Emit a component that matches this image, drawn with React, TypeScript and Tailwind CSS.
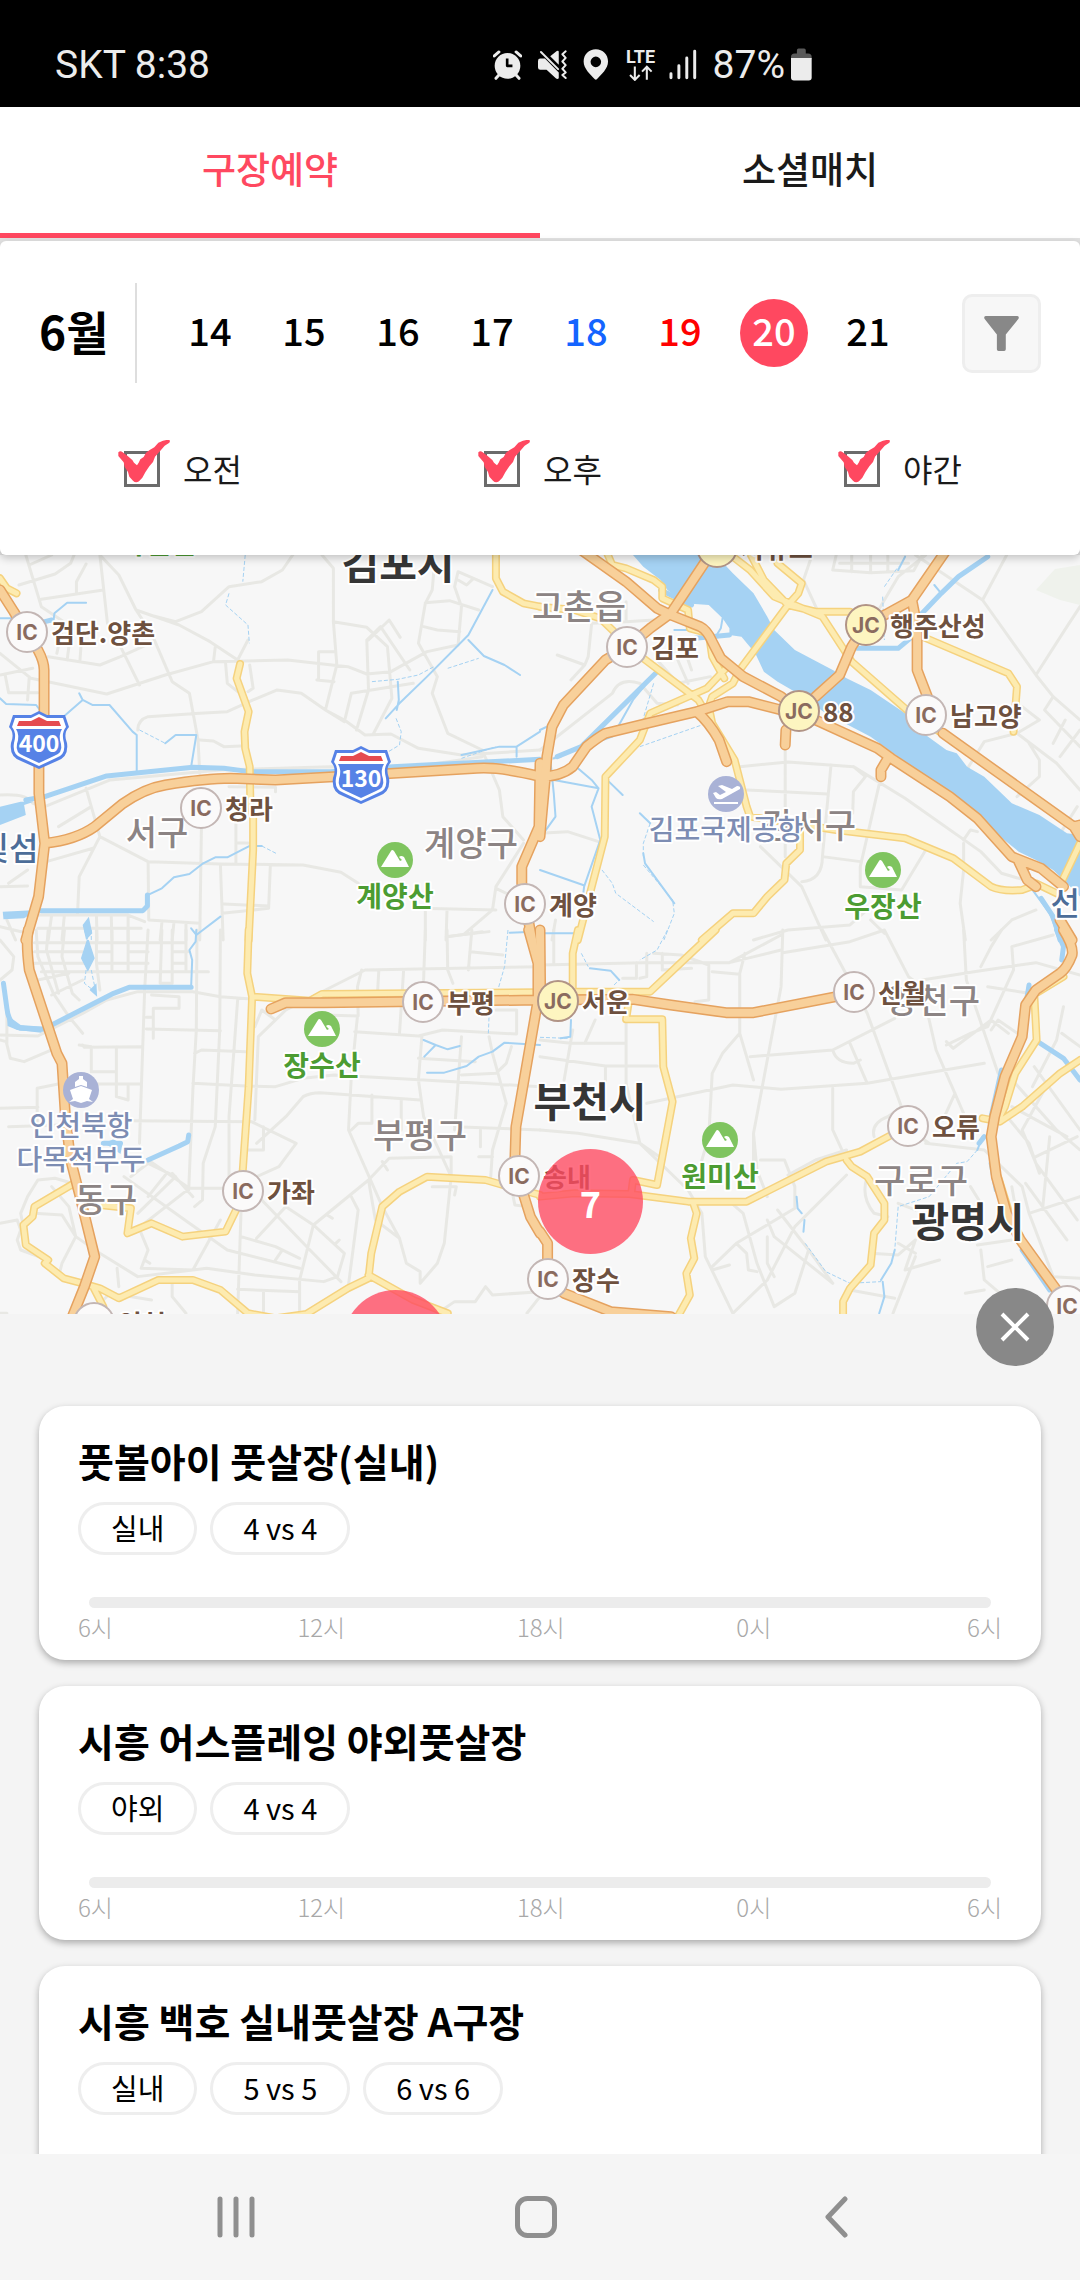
import React, { useState } from "react";

type Tile = {
  x: number;
  y: number;
  minor: string;
  stream: string;
  dotted: string;
  canal: string;
  water: string;
  yellow: string;
  orange: string;
};

// Each tile is drawn on a 1568 x 1170 grid and covers 540 x 390 of the map.
const TILES: Tile[] = [
  {
    x: 0,
    y: -5,
    minor:
      "M75 15L120 170L185 215L165 310M85 45L150 15M55 105L160 72L205 40L215 15M120 148L300 120M250 42L222 95L222 130M290 15L312 220L350 290L405 405M290 15L345 75L395 180L520 225L610 275L690 330L720 270M435 195L510 215L585 185L665 110L760 95L820 60L850 15M935 15L968 55L968 215L978 345L945 480L1000 510L1060 555L1135 552L1215 595L1340 615L1568 600M968 215L1065 232L1125 290L1138 445L1085 550M1190 360L1105 230L1065 270L1070 420L1035 540M1130 210L1070 270M1130 210L1162 262M0 310L90 385L310 432L480 375L620 335L835 330L1010 350L1065 372L1135 365L1240 305L1330 285L1340 170L1320 110L1330 65L1430 110M1260 60L1255 120L1235 160L1215 280L1270 380L1255 430L1300 550L1400 600L1450 720L1460 800L1520 870M1235 158L1305 152L1390 180M1230 230L1270 240L1335 245M395 180L440 250L500 395L550 430L575 570L580 670M400 540Q400 510 430 500L580 490L660 485L735 450L805 420L875 430L945 480L1000 515L1020 430L1200 400M620 335L625 290M655 340L660 400L715 445M725 345L735 415L720 425M925 390L925 305L970 305M920 390L970 395M85 380L80 450M15 375L25 428L110 428M0 375L95 355M140 320L290 345L350 320L435 280M200 290L195 330M235 290L232 335M580 570L620 573L650 590L700 588M250 715L290 860L230 980L225 1095M290 860L430 935L640 942L880 945L990 967L1040 1000M430 935L432 1110L580 1120M585 820L580 1170M640 945L648 1170M685 820L685 942M685 878L735 880M785 945L780 1075L645 1090M650 1062L780 1068M0 1010L80 1008M25 1000L80 960M0 735Q80 730 95 760L130 770L320 690L640 660L960 650L1140 660L1400 620M665 710L800 712L800 725M20 1110L45 1170M0 1130L80 1150M110 1095L370 1095L420 1115M110 1135L410 1135M150 1095L140 1170M187 1095L180 1170M280 1095L282 1170M323 1095L325 1170M372 1095L372 1170M470 1118L465 1170M505 1118L500 1170M540 1118L540 1170M140 890L250 855M135 935L270 895M170 830L265 770M1520 880L1440 1010L1430 1080L1350 1150M1220 1075L1440 1080M1235 1080L1235 1170M1298 1080L1295 1170M1295 1160L1420 1145M1440 1015L1490 1040M1330 90L1355 105L1375 85",
    stream:
      "M190 495L240 450L230 430M240 450L268 465L318 465L385 545L397 555L397 665M480 580L510 555L570 555L555 650M430 1035L470 1015L505 982L550 972L590 940L625 922L660 922L725 888L760 888M1120 505L1160 460L1240 380L1360 255L1430 120M1360 270L1405 318L1465 345L1510 375M1155 395L1158 450L1152 480M0 445L18 462L105 465L130 500M250 158L195 158L158 190L155 215M555 1135L570 1155L640 1100M1500 620L1500 590L1568 545M0 205L40 205M1340 615L1450 590L1500 590",
    dotted:
      "M712 15L705 95M665 130L655 165L720 225L724 280M1080 395L1155 388L1215 375L1260 350M1300 355L1390 325M1150 505L1165 545L1160 585L1120 610M405 540L480 580M760 888L805 912M1340 625L1440 590",
    canal:
      "M75 750L130 740L310 678L560 652L650 655L725 665L960 665L1140 650L1568 628M120 1082L415 1082L428 1068L428 1035M130 215L150 210",
    water: "M0 770L60 755L98 755L70 765L75 795L0 825ZM8 1085L110 1080L70 1105L10 1108ZM240 1125L258 1100L268 1150L250 1170Z",
    yellow:
      "M0 85L20 115L48 130M1440 10L1440 85L1460 125L1520 160L1568 170M697 342L687 385L722 485L710 545L712 595L725 650L727 760L735 800L735 900L722 1170",
    orange:
      "M0 120L40 185L75 245L110 300Q128 335 128 360L128 495L113 640L113 730L130 880L112 1040L75 1170M130 880Q220 870 275 830L355 762Q420 715 480 705Q600 685 670 685L800 690L1060 675L1385 655Q1450 650 1568 680M1568 640L1565 830L1515 950L1515 1000L1525 1060L1545 1170",
  },
  {
    x: 540,
    y: -5,
    minor:
      "M50 315L130 345L90 390M150 220L140 320L130 345M150 220L250 215M250 155L250 215L330 210M0 600L210 430Q230 380 290 400L340 460L400 465M340 330L400 400L495 380M400 330L430 400M430 330L440 360M860 15L850 60L960 68L1085 62L1110 15M905 15L905 65M960 15L960 65M1010 15L1010 65M870 40L1070 40M790 15L765 90L805 180M1090 15L1285 150L1440 375L1490 440L1568 510M1355 15L1285 150M1440 375L1530 230L1568 170M1120 15L1040 80L960 220M1385 550L1290 575L1190 740M1400 470L1450 510L1385 550L1500 640L1568 720M1490 440L1465 480L1568 590M1525 510L1490 580M1568 540L1510 620M1420 580L1450 630L1450 680L1385 740M1560 770L1455 940M580 650L720 636L910 650L1060 745L1280 905L1340 970L1440 1000M712 590L712 920M600 720L835 732M845 645L820 920L930 935M990 680L930 950L930 1010M910 650L945 680L910 725L908 790M640 890L760 1010L830 1170M820 920Q820 990 760 995M1120 900L1050 1020L930 1010M1230 880L1230 960L1220 1060L1235 1170M1230 870L1250 840L1270 845M950 1080L900 1125L720 1140L620 1170M960 1110L1000 1150M1370 1110L1310 1170M1440 1080L1370 1110M0 850L80 845L170 875M45 1110L35 1170M0 635L60 620",
    stream:
      "M30 630L40 730L45 800L10 850M110 655L150 690L170 715L150 770L175 870L128 1010L110 1170M40 690L170 715M330 375L270 450L210 560L100 600L40 625M0 540L40 520M0 960L125 1005M200 695L240 735M290 790L320 820M300 910L305 940L390 1060M530 205L525 235L510 260M390 240L460 240L490 250M1430 1020L1480 1090L1510 1170M1060 20L1040 60M0 1150L120 1150M1145 105L1165 130",
    dotted:
      "M290 590L470 525M320 820L300 880L300 920M300 945L385 1050L390 1090L360 1170M180 960L210 1000L220 1030L330 1115M995 140L1000 270M1000 110L1040 50M330 400L290 540M540 380L545 400",
    canal:
      "M920 295L1040 295L1075 265M1080 230L1100 200L1165 130L1215 80L1300 20M450 265L550 255M50 620L120 590L340 365M350 120L440 165M1455 1045L1490 1100L1510 1170",
    water:
      "M270 15L300 50L350 90L370 120L420 160L490 165L530 205L550 235L550 255L585 260L625 310L650 365L690 395L740 425L830 490L960 560L1040 620L1180 730L1260 790L1300 830L1390 905L1440 930L1490 960L1530 1000L1568 1040L1568 855L1530 850L1450 795L1370 760L1290 680L1240 650L1210 610L1180 600L1120 555L1060 490L960 420L890 385L850 360L740 300L680 240L660 200L620 130L560 70L510 15Z",
    yellow:
      "M195 10L210 45L250 55L330 90L355 110L355 145L430 180L435 235L490 250L500 320L535 385M0 170L100 180L175 205L215 245L255 290L460 450L500 520L565 630L600 770L610 800L860 840L1060 865L1200 925L1310 1010Q1340 1025 1400 1020L1440 1005M560 20L610 60L680 140L820 200L905 335L1065 480L1160 545M610 10L650 90L720 165M690 40L760 100L750 130L720 165L580 360L560 400L500 440L490 470L500 520M720 165L800 185L900 185M540 355L485 415L430 440L320 490L290 570L190 680L188 860L110 1170M1110 260L1360 370L1385 410L1375 545M755 850L755 900L715 940L710 990L660 1040L620 1090L560 1090L470 1170M1568 880L1515 995M1440 1000L1500 1030",
    orange:
      "M0 860L15 690L20 620L35 530L68 465L190 330L255 290L320 235L380 190L480 35M120 0L250 95L340 175L380 195L465 230Q485 240 500 275L525 325L590 380L700 440L750 480L800 510L980 595L1020 625L1190 740L1270 805L1370 920L1455 955L1520 1010M0 680Q60 680 95 650L135 590Q165 565 190 550L310 520L455 485L545 455L605 455L700 480M455 485Q490 515 520 570L542 635M712 585L714 540M1010 625L990 660L990 680M800 440L870 375L905 290L945 225L1010 190L1080 150L1180 0M1080 150L1095 230L1095 360L1125 440M1170 550L1550 830L1568 860M1550 830L1568 825M1390 935L1415 990L1440 1010M1510 1110L1545 1170",
  },
  {
    x: 0,
    y: 375,
    minor:
      "M105 0L110 80L155 190L200 260L240 310M140 0L135 60L170 190M187 0L180 80L210 190L230 210M280 0L280 100L290 180M325 0L325 125M372 0L372 125M430 0L420 180L405 640M470 0L465 160L500 160L500 0M540 0L540 120M100 38L540 38M100 65L240 65M280 65L325 65M372 65L430 65M100 100L250 100M280 100L430 100M500 65L545 65M500 100L540 100M120 125L605 125M110 150L200 130M150 195L240 150M0 30L40 80L35 120L0 150M0 315L110 318L240 250L310 210L400 185L560 185L640 200L740 208M0 330L18 335L30 385L70 395L150 360M20 250L20 340M240 345L245 352L410 350M230 345L265 350L265 425L335 425M338 350L338 500L372 510L372 465M240 462L410 462M108 600L108 475L180 460M0 535L110 532M25 590L180 585M440 195L520 200L520 235L445 235L445 325M440 262L425 262M425 297L640 302M572 0L570 300L560 480L548 780M640 0L638 300L625 590L590 700L588 810L565 830M690 210L665 560L665 760M565 370L585 360L715 365M560 460L715 468L800 470L880 445L970 435L1230 450L1568 470M380 572L730 575L860 640L810 710L735 745M720 660L765 660L765 590M740 570L750 320L830 240L1060 120L1568 110M740 290L760 240L800 270M940 255L1040 258L1038 170L1050 120M1100 120L1095 210M1172 120L1160 310M1235 0L1230 150M1298 0L1300 120L1315 160M1030 305L1215 318L1285 300L1500 312L1500 240L1440 240M1370 0L1360 120M1365 65L1460 75M1300 20L1400 5M1038 258L1020 440L1012 600L1110 830L1160 925L1180 1000L1220 1025L1220 1060L1270 1000L1290 940L1310 740M1225 320L1215 450L1230 560L1310 740M1340 320L1320 600M1420 320L1430 370L1470 520L1430 660L1425 740M745 640L830 560L880 500Q900 488 930 488L1220 510M1165 510L1165 600M1020 600L1040 580L1080 580L1080 495M1215 385L1380 395M1340 435L1440 430L1470 400L1485 350M1320 590L1568 600M1395 600L1395 650M1390 680L1430 680M1310 740L1310 680L1130 685L1070 750L910 885L870 1050L870 1150M1070 750L1090 870L1160 925M1110 695L1125 720M1255 770L1325 770L1320 795M745 925L830 830L910 885L1000 970L980 1040L940 1055L740 1035L600 1015L560 1020L410 1015M430 690L550 775L645 775M360 740L550 880L660 960L870 1015M380 740L430 700L510 740L400 850M480 735L430 800M550 775L420 880M500 730L560 800M700 840L690 1152M760 810L900 960L990 1055M700 920L800 950L870 985M800 990L820 960M1020 800L1040 840L1020 1000L1010 1080M950 855L965 865M975 940L985 930M0 880L50 870L60 900L50 930L60 960L140 990M80 800L110 750L160 745L210 760M80 800L60 850L70 900M100 850L180 855L220 920L180 1000L170 1040M150 770L200 830L220 920L290 970L400 1040L560 1020L640 870M410 910L430 960L410 1015M340 1015L345 1070M500 1060L500 1100L540 1150M280 1130L320 1090L440 1110M690 1078L870 1085M765 1085L765 1150M0 1150L20 1150M420 990L435 1000M1270 1150L1320 1115L1380 1115L1410 1070L1430 1095L1568 1085M1530 1150L1568 1100M1490 800L1495 825L1530 830",
    stream:
      "M570 0L568 35L550 60L558 90L555 170M1232 380L1265 345L1230 330M1265 345L1300 358L1335 348M1240 428L1290 428L1355 408L1390 380L1430 365L1465 338L1568 345M1480 8L1550 5",
    dotted:
      "M1475 0L1465 110L1440 200L1420 260L1418 310M245 0L255 30M250 120L245 160L270 180M265 120L275 170M265 0L265 30",
    canal: "M10 160L20 235Q25 285 60 295L125 298M150 285L330 190L375 172L555 172M430 690L520 648L545 635L548 615M300 640L350 640",
    water: "M252 30L258 30L275 85L255 125L235 85ZM260 180L280 160L282 200ZM300 640L330 628L355 645L350 672L320 650ZM20 255L60 285L125 290L120 308L50 300L22 288Z",
    yellow:
      "M722 0L718 130L732 200L722 470L705 720L690 830L655 905L530 920L440 880L370 910L380 835L290 825M230 790L215 760L100 830L95 860L68 885L75 945L140 990L130 1000L185 1045L240 1060L290 1075L345 1105L460 1050L560 1050L640 1080L720 1150L800 1165L890 1152L1010 1075L1070 1045L1078 970L1110 830L1160 785L1240 740L1410 750L1460 765L1568 795M732 200L900 212L935 192L1568 187M1070 1035L1200 1110L1300 1150M270 1070L300 1130",
    orange:
      "M82 0Q75 40 85 120L165 370L180 400L190 560L205 690L230 790L275 980L245 1070L210 1160M1535 0L1562 100L1562 210L1520 460L1498 590L1495 690L1510 760L1540 860L1568 910M787 237L830 218L940 218L1568 210",
  },
  {
    x: 540,
    y: 375,
    minor:
      "M40 0L40 100M0 105L300 98L550 98L700 15M280 98L280 145L240 145M310 70L310 140L290 145M355 70L355 120L440 115M330 70L410 75L490 105L490 210L450 215M595 70L580 130L580 310L620 450M500 125L580 133M705 0L700 170L620 610L630 720L660 800M705 68L900 35L1000 0L1070 140L1110 170M820 0L950 250L1060 560M550 98L700 60M1230 0L1238 150L1330 430L1370 460M1110 150L1260 125L1440 98L1568 135M1280 110L1310 50L1340 0M1490 15L1370 50L1375 120L1300 290L1250 310L1180 345M1180 335L1200 355L1310 270L1360 310M1300 170L1420 190M1310 300L1330 270L1400 320M0 330L90 340L250 340M95 300L70 450M130 340L160 270M190 410L190 460M0 380L190 408L340 408M250 280L250 460L290 640L430 780L470 850M310 520L560 465L700 478L950 460L1290 400M580 310L530 370L500 430L490 620L450 760M610 380L850 360L1030 265M850 360Q860 400 910 400L930 390M900 340L950 460M1110 180L1150 360L1230 550M850 475L850 600L890 690M0 600L110 610L290 640L360 690M620 610L620 700M640 690L710 690L740 770L740 830M720 735L800 690L890 660M740 835L570 940L500 1010M970 620Q960 580 1010 560L1050 530M1205 490L1170 570M1120 640L1290 660L1400 770L1420 850L1490 1040M890 735L740 890L660 1050L560 1150M470 850L480 980L560 1150M545 810L590 850L630 1000L680 1130M660 870L680 920L850 1060M690 840L780 960L740 1090L680 1130M570 940L600 970L605 1020L630 1025M660 920L660 1000L680 1040M500 1020L550 1005M950 740Q930 800 970 850L1010 860M960 970L1040 975L1090 930L1060 1020L1160 990M1040 820L1090 840M1040 940L1090 970M900 1080L1030 1105M1090 980L1025 1150M1270 945L1370 930M1280 960L1290 1050L1370 1120M1300 1010L1370 990M1235 1090L1290 1080M1370 770L1400 950L1500 1090M1250 770L1280 820L1240 850M1435 410L1568 600M1520 230L1500 330L1430 470M1515 310L1568 350M1380 460L1500 600L1568 660M1370 530L1530 620M1480 450L1400 600L1440 700L1560 870M1560 620L1440 680M1410 760L1530 930M1340 540L1420 640L1450 730M1420 850L1568 800M1490 1040L1568 1045M1480 620L1460 830M780 960L850 1060M1060 590L1130 640",
    stream:
      "M145 115L205 122L230 150M90 270L88 320L60 325M745 800L748 835L760 850M768 870L765 905M995 1055L1000 1100L985 1150M1030 960L1020 1000L990 1050M1285 620L1270 660M10 155L8 170",
    dotted:
      "M370 0L340 60L290 90M120 70L140 110M0 322L80 325M770 940L830 1025L900 1060L990 1055M1270 660L1240 695L1210 700L1130 800L1040 830L1030 960M215 165L230 150",
    canal: "M1500 0L1520 50L1515 90M1420 165L1405 260M1340 420L1310 560M1445 335L1520 385L1568 450M1290 620L1275 640M1310 700L1325 780M1400 960L1480 1080",
    water: "",
    yellow:
      "M110 0L95 70L95 180M510 0L320 185L100 185M260 200L250 268L355 268L358 410L385 515L340 765L270 750L265 790M0 800L100 790L260 792L430 815L600 815L830 695L930 665L1020 615L1070 590M1285 565L1335 575L1400 530L1510 430L1568 390M890 690L905 710L950 740L1000 820L1000 870L970 910L960 1005L900 1075L880 1115L880 1160M445 820L455 850L438 925L448 985L425 1030L435 1095L400 1160M1435 190L1442 330L1380 430L1350 530L1330 570M1520 140L1440 190M1330 740L1360 840",
    orange:
      "M0 0L2 210L270 208L380 225L540 248L620 248L860 200M0 905L22 940L22 1050L70 1090L205 1145L380 1160M1520 0Q1550 50 1545 75Q1530 115 1510 130L1440 180L1410 225L1400 320L1350 440L1320 560L1310 620L1325 740L1355 850L1395 930L1500 1080",
  },
];

type TileLayer = Exclude<keyof Tile, "x" | "y">;

type LayerProps = {
  layer: TileLayer;
  stroke?: string;
  width?: number;
  fill?: string;
  dash?: string;
};

const Layer = ({
  layer,
  stroke = "none",
  width = 0,
  fill = "none",
  dash,
}: LayerProps) => (
  <g
    fill={fill}
    stroke={stroke}
    strokeWidth={width}
    strokeLinejoin="round"
    strokeLinecap={dash ? "butt" : "round"}
    strokeDasharray={dash}
  >
    {TILES.map((tile) => (
      <path
        key={`${tile.x}-${tile.y}`}
        d={tile[layer]}
        transform={`translate(${tile.x} ${tile.y}) scale(0.3444 0.3333)`}
        vectorEffect="non-scaling-stroke"
      />
    ))}
  </g>
);

type Junction = { kind: "IC" | "JC"; name: string; x: number; y: number };

const JUNCTIONS: Junction[] = [
  { kind: "IC", name: "검단.양촌", x: 27, y: 77 },
  { kind: "IC", name: "청라", x: 201, y: 253 },
  { kind: "IC", name: "김포", x: 627, y: 92 },
  { kind: "JC", name: "자유로", x: 717, y: -8 },
  { kind: "JC", name: "행주산성", x: 866, y: 70 },
  { kind: "JC", name: "88", x: 799, y: 156 },
  { kind: "IC", name: "남고양", x: 926, y: 160 },
  { kind: "IC", name: "계양", x: 525, y: 349 },
  { kind: "IC", name: "부평", x: 423, y: 447 },
  { kind: "JC", name: "서운", x: 558, y: 446 },
  { kind: "IC", name: "신월", x: 854, y: 437 },
  { kind: "IC", name: "오류", x: 908, y: 571 },
  { kind: "IC", name: "가좌", x: 243, y: 636 },
  { kind: "IC", name: "송내", x: 519, y: 621 },
  { kind: "IC", name: "장수", x: 548, y: 724 },
  { kind: "IC", name: "", x: 1067, y: 751 },
  { kind: "IC", name: "인천", x: 94, y: 768 },
];

const DISTRICTS = [
  { name: "고촌읍", x: 579, y: 49 },
  { name: "서구", x: 157, y: 275 },
  { name: "계양구", x: 471, y: 286 },
  { name: "강서구", x: 809, y: 268 },
  { name: "양천구", x: 933, y: 443 },
  { name: "부평구", x: 420, y: 578 },
  { name: "동구", x: 106, y: 642 },
  { name: "구로구", x: 921, y: 623 },
];

const CITIES = [
  { name: "김포시", x: 398, y: 6 },
  { name: "부천시", x: 590, y: 544 },
  { name: "광명시", x: 968, y: 664 },
];

const PEAKS = [
  { name: "가현산", x: 158, y: -48 },
  { name: "계양산", x: 395, y: 305 },
  { name: "우장산", x: 883, y: 315 },
  { name: "장수산", x: 322, y: 474 },
  { name: "원미산", x: 720, y: 585 },
];

const SHIELDS = [
  { name: "400", x: 39, y: 185 },
  { name: "130", x: 361, y: 220 },
];

const VenueMap = () => (
  <div className="relative aspect-[1080/759] w-full shrink-0 overflow-hidden bg-[#f7f7f7]">
    <svg
      viewBox="0 0 1080 759"
      className="block h-full w-full"
      dominantBaseline="central"
      role="img"
      aria-label="지도"
    >
      <Layer layer="minor" stroke="#e8e8e4" width={3} />
      <path d="M1036 35L1055 14L1080 10V50L1060 45Z" fill="#eff2ec" />
      <Layer layer="water" fill="#a5d2f3" />
      <Layer layer="canal" stroke="#a5d2f3" width={5} />
      <Layer layer="stream" stroke="#a5d2f3" width={2} />
      <Layer layer="dotted" stroke="#a5d2f3" width={1} dash="4 2" />
      <Layer layer="yellow" stroke="#f5d27e" width={8} />
      <Layer layer="yellow" stroke="#fdebb0" width={5} />
      <Layer layer="orange" stroke="#e5a25f" width={11} />
      <Layer layer="orange" stroke="#f8d09a" width={8} />

      <g
        textAnchor="middle"
        stroke="#ffffff"
        strokeWidth="4"
        strokeLinejoin="round"
        paintOrder="stroke"
        fontWeight="500"
      >
        {DISTRICTS.map(({ name, x, y }) => (
          <text key={name} x={x} y={y} fontSize="34" fill="#8c8484">
            {name}
          </text>
        ))}
        <g fontSize="28" fill="#7d8db3">
          <text x="726" y="273">
            김포국제공항
          </text>
          <text x="81" y="569">
            인천북항
          </text>
          <text x="81" y="603">
            다목적부두
          </text>
        </g>
        <g fontSize="32" fill="#4c6d98">
          <text x="9" y="291">
            빛섬
          </text>
          <text x="1080" y="346">
            선유
          </text>
        </g>
        {PEAKS.map(({ name, x, y }) => (
          <text
            key={name}
            x={x}
            y={y + 35}
            fontSize="28"
            fontWeight="700"
            fill="#4c9c32"
          >
            {name}
          </text>
        ))}
        {CITIES.map(({ name, x, y }) => (
          <text
            key={name}
            x={x}
            y={y}
            fontSize="41"
            fontWeight="700"
            fill="#363636"
          >
            {name}
          </text>
        ))}
      </g>

      {PEAKS.map(({ name, x, y }) => (
        <g key={name} transform={`translate(${x} ${y})`}>
          <circle r="18" fill="#7fc45f" />
          <path
            d="M-14 7L-4 -9Q-3 -11 -1 -9L5 1L7 0L4 -3Q6 -5 9 -3L14 7Z"
            fill="#ffffff"
          />
        </g>
      ))}

      <g transform="translate(726 239)">
        <circle r="18" fill="#a9b2d6" />
        <path
          d="M-13 -1L-10 -2L-6 1L0 -2L-8 -8L-4 -9L6 -5L11 -8Q15 -8 14 -5L-4 5Q-8 6 -10 4Z"
          fill="#ffffff"
        />
        <path d="M-12 9H12" stroke="#ffffff" strokeWidth="2" />
      </g>
      <g transform="translate(81 535)">
        <circle r="18" fill="#a9b2d6" />
        <path
          d="M-2 -14H2V-11L6 -8V-3L0 -5L-6 -3V-8L-2 -11ZM-11 0L0 -4L11 0L8 9L12 12L6 11L0 13L-6 11L-12 12L-8 9Z"
          fill="#ffffff"
        />
      </g>

      {SHIELDS.map(({ name, x, y }) => (
        <g key={name} transform={`translate(${x} ${y})`}>
          <path
            d="M0 -29L8 -25H26L30 -13Q24 -7 28 3Q30 17 18 21L0 29L-18 21Q-30 17 -28 3Q-24 -7 -30 -13L-26 -25H-8Z"
            fill="#5682e6"
          />
          <path
            d="M0 -26L8 -22H24L27 -13Q22 -7 25 3Q27 15 17 18L0 26L-17 18Q-27 15 -25 3Q-22 -7 -27 -13L-24 -22H-8Z"
            fill="#ffffff"
          />
          <path
            d="M-23 -11H23Q19 -5 22 4Q24 13 15 16L0 23L-15 16Q-24 13 -22 4Q-19 -5 -23 -11Z"
            fill="#5682e6"
          />
          <path d="M-22 -14L-20 -19H-8L0 -23L8 -19H20L22 -14Z" fill="#e54b4f" />
          <text
            y="2"
            fontSize="23"
            fontWeight="700"
            fill="#ffffff"
            textAnchor="middle"
          >
            {name}
          </text>
        </g>
      ))}

      {JUNCTIONS.map(({ kind, name, x, y }) => (
        <g key={`${x}-${y}`} transform={`translate(${x} ${y})`}>
          <circle
            r="20"
            fill={kind === "JC" ? "#fdf5c0" : "#fbfafa"}
            stroke={kind === "JC" ? "#b19486" : "#c3b6b4"}
            strokeWidth="2"
          />
          <text
            className="font-['Inter','Liberation_Sans',sans-serif]"
            fontSize="21"
            fontWeight="700"
            fill="#8a6b5f"
            textAnchor="middle"
          >
            {kind}
          </text>
          <text
            x="24"
            y="-1"
            fontSize="26"
            fontWeight="700"
            fill="#6e513f"
            stroke="#ffffff"
            strokeWidth="4"
            strokeLinejoin="round"
            paintOrder="stroke"
          >
            {name}
          </text>
        </g>
      ))}
    </svg>

    <button
      type="button"
      className="absolute top-[78.3%] left-[49.8%] size-[105px] rounded-full bg-[#ff4860]/78 text-[36px] leading-none font-bold text-white"
    >
      7
    </button>
    <button
      type="button"
      aria-label="구장 보기"
      className="absolute top-[96.8%] left-[31.8%] size-[105px] rounded-full bg-[#ff4860]/78"
    />
  </div>
);

const StatusBar = () => (
  <div className="flex h-[107px] shrink-0 items-center justify-between bg-black pt-[22px] pr-[268px] pl-[55px] font-['Roboto',sans-serif] text-[39px] leading-[48px] text-[#ececec]">
    <span>SKT 8:38</span>
    <div className="flex items-center gap-[16px]">
      <svg viewBox="96 60 88 92" className="h-[31px] w-[29px]" fill="none">
        <circle cx="140" cy="110" r="39" fill="#ececec" />
        <path
          d="M139 88V110H155"
          stroke="#000000"
          strokeWidth="8"
          strokeLinejoin="round"
        />
        <path
          d="M100 80L114 68M180 80L166 68M114 138L105 148M166 138L175 148"
          stroke="#ececec"
          strokeWidth="9"
          strokeLinecap="round"
        />
      </svg>
      <svg viewBox="231 60 88 92" className="h-[31px] w-[29px]" fill="none">
        <path
          d="M231 95Q231 88 238 88H252L294 130V148Q290 152 285 148L257 122H238Q231 122 231 115ZM268 81L288 65Q294 62 294 68V107Z"
          fill="#ececec"
        />
        <path d="M240 68L292 120" stroke="#ececec" strokeWidth="6" strokeLinecap="round" />
        <path
          d="M315 66L305 75L315 86L305 97L315 108L305 119L315 130L305 138L315 147"
          stroke="#ececec"
          strokeWidth="6"
          strokeLinejoin="round"
          strokeLinecap="round"
        />
      </svg>
      <svg viewBox="368 58 77 94" className="h-[31px] w-[26px]" fill="#ececec">
        <path
          fillRule="evenodd"
          d="M406 59C385 59 369 75 369 96C369 118 390 136 403 150Q406 153 409 150C422 136 443 118 443 96C443 75 427 59 406 59ZM406 81A16 16 0 1 1 406 113A16 16 0 1 1 406 81Z"
        />
      </svg>
      <span className="flex w-[32px] flex-col items-center text-[18px] leading-[16px] font-bold">
        LTE
        <svg viewBox="508 108 70 46" className="h-[16px] w-[24px]" fill="none">
          <path
            d="M525 112V150M511 137L525 151L539 137M560 151V114M546 127L560 113L574 127"
            stroke="#ececec"
            strokeWidth="6"
          />
        </svg>
      </span>
      <svg viewBox="627 58 85 92" className="-ml-1 h-[31px] w-[28px]" fill="none">
        <path
          d="M633 132V144M657 108V144M681 84V144M705 64V144"
          stroke="#ececec"
          strokeWidth="9"
          strokeLinecap="round"
        />
      </svg>
      <div className="flex items-center gap-[6px]">
        <span>87%</span>
        <svg viewBox="990 57 64 99" className="h-[33px] w-[21px]">
          <path
            d="M990 90V84Q990 73 1001 73H1008V63Q1008 58 1013 58H1030Q1035 58 1035 63V73H1042Q1053 73 1053 84V90Z"
            fill="#5a5a5a"
          />
          <path
            d="M990 87H1053V146Q1053 155 1044 155H999Q990 155 990 146Z"
            fill="#ececec"
          />
        </svg>
      </div>
    </div>
  </div>
);

const TABS = ["구장예약", "소셜매치"];

const Tabs = () => {
  const [active, setActive] = useState(TABS[0]);

  return (
    <nav className="flex h-[131px] shrink-0 bg-white">
      {TABS.map((tab) => (
        <button
          key={tab}
          type="button"
          onClick={() => setActive(tab)}
          className={`flex-1 border-b-[5px] pb-1 text-[37px] leading-[48px] font-medium ${
            tab === active
              ? "border-[#ff4860] text-[#ff4860]"
              : "border-white text-[#1a1a1a]"
          }`}
        >
          {tab}
        </button>
      ))}
    </nav>
  );
};

const DAYS = [
  { day: 14, color: "text-black" },
  { day: 15, color: "text-black" },
  { day: 16, color: "text-black" },
  { day: 17, color: "text-black" },
  { day: 18, color: "text-[#1464ff]" },
  { day: 19, color: "text-[#ff0000]" },
  { day: 20, color: "text-black" },
  { day: 21, color: "text-black" },
];

const TIMES = ["오전", "오후", "야간"];

const TimeCheckbox = ({ label }: { label: string }) => {
  const [checked, setChecked] = useState(true);

  return (
    <label className="flex flex-1 items-center justify-center gap-[13px] text-[32px] leading-[44px] text-[#1a1a1a]">
      <span className="relative h-[58px] w-[52px]">
        <input
          type="checkbox"
          checked={checked}
          onChange={(e) => setChecked(e.target.checked)}
          className="absolute top-[11px] left-[6px] size-[36px] appearance-none border-[3px] border-[#6b6b6b] bg-white"
        />
        {checked && (
          <svg
            viewBox="57 60 156 144"
            className="pointer-events-none absolute top-0 left-0 h-[48px] w-[52px]"
          >
            <path
              d="M58 97Q64 90 71 97L86 108L100 120L105 128L114 136L119 128L124 118L134 111L141 98L152 90L166 82L178 68L192 62L207 59Q216 60 211 68L197 77L186 90L178 99L168 110L162 126L151 139L139 157L130 173L120 184Q110 190 102 182L91 170L87 156L77 141L74 127L65 116L58 108Z"
              fill="#ff4860"
            />
          </svg>
        )}
      </span>
      <span className="pb-0.5">{label}</span>
    </label>
  );
};

const FilterPanel = () => {
  const [selected, setSelected] = useState(20);

  return (
    <section className="relative z-10 shrink-0 rounded-[6px] bg-white pt-[42px] pb-[57px] shadow-[0_3px_8px_rgba(0,0,0,0.22)]">
      <div className="flex items-center px-[39px]">
        <h1 className="flex h-[100px] w-[98px] items-center border-r-2 border-[#dedede] pb-1.5 text-[46px] leading-[60px] font-bold text-black">
          6월
        </h1>
        <div className="mr-[47px] ml-[26px] flex flex-1">
          {DAYS.map(({ day, color }) => (
            <div key={day} className="flex flex-1 justify-center">
              <button
                type="button"
                onClick={() => setSelected(day)}
                className={`size-[68px] rounded-full pb-1.5 text-[38px] leading-[60px] font-medium ${
                  day === selected ? "bg-[#ff4860] text-white" : color
                }`}
              >
                {day}
              </button>
            </div>
          ))}
        </div>
        <button
          type="button"
          aria-label="필터"
          className="flex size-[79px] items-center justify-center rounded-[10px] border-[3px] border-[#eeeeee] bg-[#f7f7f7]"
        >
          <svg viewBox="0 0 106 106" className="size-[35px]" fill="#888888">
            <path d="M5 0H101Q108 2 104 9L66 56V101Q66 106 61 106H44Q39 106 39 101V56L2 9Q-2 2 5 0Z" />
          </svg>
        </button>
      </div>
      <div className="mt-[57px] flex">
        {TIMES.map((label) => (
          <TimeCheckbox key={label} label={label} />
        ))}
      </div>
    </section>
  );
};

type Venue = {
  name: string;
  tags: string[];
};

const VENUES: Venue[] = [
  { name: "풋볼아이 풋살장(실내)", tags: ["실내", "4 vs 4"] },
  { name: "시흥 어스플레잉 야외풋살장", tags: ["야외", "4 vs 4"] },
  { name: "시흥 백호 실내풋살장 A구장", tags: ["실내", "5 vs 5", "6 vs 6"] },
];

const VenueCard = ({ name, tags }: Venue) => (
  <li className="shrink-0 rounded-[26px] bg-white px-[39px] pt-[26px] pb-[18px] shadow-[0_3px_7px_rgba(0,0,0,0.3)]">
    <h2 className="text-[39px] leading-[56px] font-bold text-black">{name}</h2>
    <div className="mt-[14px] flex gap-[13px]">
      {tags.map((tag) => (
        <span
          key={tag}
          className="rounded-full border-[3px] border-[#eeeeee] px-[30px] pb-[3px] text-[29px] leading-[44px] text-black"
        >
          {tag}
        </span>
      ))}
    </div>
    <div className="mx-[11px] mt-[42px] h-[11px] rounded-full bg-[#ececec]" />
    <div className="mt-[5px] mb-px flex text-[24px] leading-[28px] font-light text-[#a8a8a8]">
      <span className="w-[23.75%]">6시</span>
      <span className="w-[23.75%]">12시</span>
      <span className="w-[23.75%]">18시</span>
      <span className="w-[23.75%]">0시</span>
      <span className="ml-auto">6시</span>
    </div>
  </li>
);

const VenueSheet = () => (
  <section className="relative flex min-h-0 flex-1 flex-col bg-[#f4f4f4]">
    <button
      type="button"
      aria-label="닫기"
      className="absolute -top-[26px] right-[26px] z-10 flex size-[78px] items-center justify-center rounded-full bg-[#888888]"
    >
      <svg viewBox="0 0 30 30" className="size-[30px]" fill="none">
        <path d="M2 2L28 28M28 2L2 28" stroke="#ffffff" strokeWidth="4" />
      </svg>
    </button>
    <ul className="flex min-h-0 flex-1 flex-col gap-[26px] overflow-hidden px-[39px] pt-[92px]">
      {VENUES.map((venue) => (
        <VenueCard key={venue.name} {...venue} />
      ))}
    </ul>
  </section>
);

const NavigationBar = () => (
  <nav className="flex h-[126px] shrink-0 items-center justify-center bg-[#f5f5f5] pr-2">
    <button type="button" aria-label="최근 앱" className="flex w-[28%] justify-center">
      <svg viewBox="0 0 38 42" className="h-[42px] w-[38px]" fill="none">
        <path
          d="M3 3V39M19 3V39M35 3V39"
          stroke="#8f8f8f"
          strokeWidth="5"
          strokeLinecap="round"
        />
      </svg>
    </button>
    <button type="button" aria-label="홈" className="flex w-[28%] justify-center">
      <svg viewBox="0 0 42 42" className="size-[42px]" fill="none">
        <rect
          x="2.5"
          y="2.5"
          width="37"
          height="37"
          rx="10"
          stroke="#8f8f8f"
          strokeWidth="5"
        />
      </svg>
    </button>
    <button type="button" aria-label="뒤로" className="flex w-[28%] justify-center">
      <svg viewBox="0 0 24 42" className="h-[42px] w-[24px]" fill="none">
        <path
          d="M21 3L4 21L21 39"
          stroke="#8f8f8f"
          strokeWidth="5"
          strokeLinecap="round"
          strokeLinejoin="round"
        />
      </svg>
    </button>
  </nav>
);

export default function App() {
  return (
    <div className="flex h-screen flex-col overflow-hidden bg-[#e2e2e2] font-['Noto_Sans_CJK_KR',sans-serif]">
      <StatusBar />
      <Tabs />
      <main className="flex min-h-0 flex-1 flex-col pt-[3px]">
        <FilterPanel />
        <VenueMap />
        <VenueSheet />
      </main>
      <NavigationBar />
    </div>
  );
}
